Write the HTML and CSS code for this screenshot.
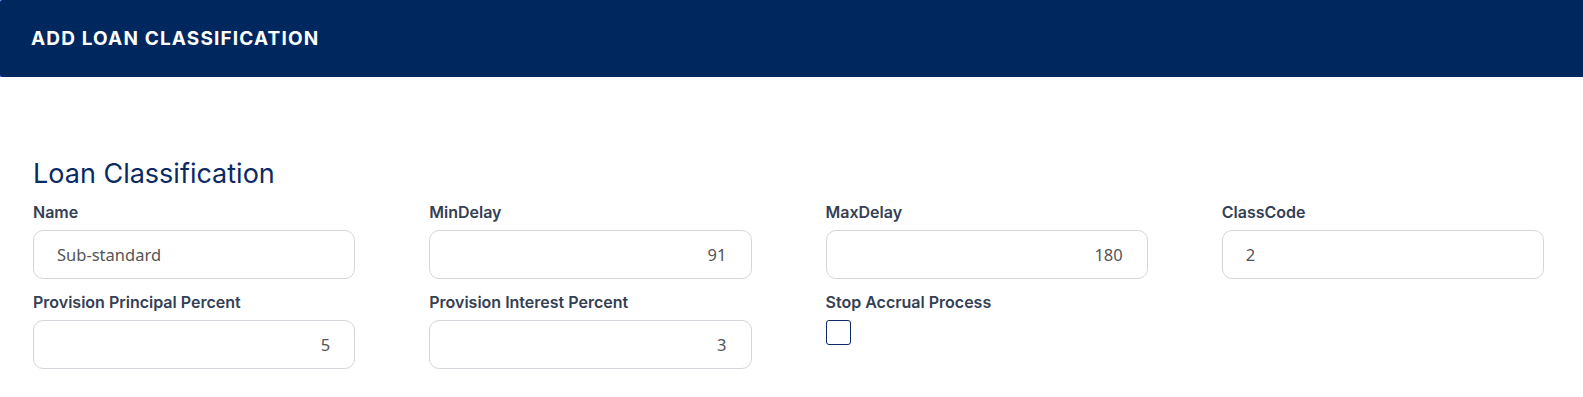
FILE: index.html
```html
<!DOCTYPE html>
<html lang="en">
<head>
  <meta charset="UTF-8" />
  <title>Add Loan Classification</title>
  <link rel="stylesheet" href="styles.css">
</head>
<body>
  <div class="page-header">
    <h2>ADD LOAN CLASSIFICATION</h2>
  </div>

  <div class="form-section">
    <h1 class="section-title">Loan Classification</h1>

    <div class="form-grid">
      <div class="field">
        <label>Name</label>
        <input type="text" class="form-input" value="Sub-standard">
      </div>
      <div class="field">
        <label>MinDelay</label>
        <input type="text" class="form-input numeric" value="91">
      </div>
      <div class="field">
        <label>MaxDelay</label>
        <input type="text" class="form-input numeric" value="180">
      </div>
      <div class="field">
        <label>ClassCode</label>
        <input type="text" class="form-input" value="2">
      </div>

      <div class="field">
        <label>Provision Principal Percent</label>
        <input type="text" class="form-input numeric" value="5">
      </div>
      <div class="field">
        <label>Provision Interest Percent</label>
        <input type="text" class="form-input numeric" value="3">
      </div>
      <div class="field">
        <label>Stop Accrual Process</label>
        <span class="check-box"></span>
      </div>
    </div>
  </div>
</body>
</html>
```

FILE: styles.css
```css
body {
  margin: 0;
  background-color: #fff;
  font-family: Inter, "Liberation Sans", sans-serif;
  color: #344054;
}
.page-header {
  background-color: #00285f;
  height: 77px;
  display: flex;
  align-items: center;
  padding-left: 31px;
  border-radius: 3px 0 0 3px;
  box-shadow: -1px 0 0 #2f6be8;
}
.page-header h2 {
  margin: 0;
  color: #fff;
  font-size: 19px;
  font-weight: 700;
  letter-spacing: 1.15px;
}
.form-section {
  padding: 80px 39px 0 33px;
}
.section-title {
  margin: 0 0 12px;
  font-size: 27px;
  font-weight: 400;
  color: #0b2a64;
  line-height: 34px;
}
.form-grid {
  display: grid;
  grid-template-columns: repeat(4, 1fr);
  column-gap: 74px;
  row-gap: 14px;
}
.field label {
  display: block;
  font-size: 16px;
  font-weight: 600;
  line-height: 19px;
  margin-bottom: 8px;
}
.form-input {
  box-sizing: border-box;
  width: 100%;
  height: 49px;
  border: 1px solid #d3d6db;
  border-radius: 10px;
  padding: 0 23px;
  font-family: "Noto Sans", "Open Sans", sans-serif;
  font-size: 16.5px;
  color: #555;
  outline: none;
}
.form-input.numeric {
  text-align: right;
  padding-right: 24px;
}
.check-box {
  display: block;
  box-sizing: border-box;
  width: 25px;
  height: 25px;
  border: 1.5px solid #0b2a64;
  border-radius: 3px;
}
```
